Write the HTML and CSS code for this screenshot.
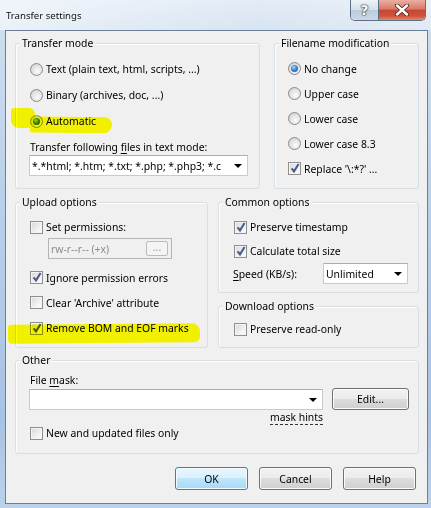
FILE: index.html
```html
<!DOCTYPE html>
<html lang="en">
<head>
    <meta charset="UTF-8">
    <meta name="viewport" content="width=device-width, initial-scale=1.0">
    <title>Transfer settings</title>
    <link rel="stylesheet" href="styles.css">
</head>
<body>

    <div class="titlebar">
        <span class="title">Transfer settings</span>
        <div class="caption-buttons">
            <span class="cap-btn help-btn">?</span>
            <span class="cap-btn close-btn">
                <svg width="16" height="12" viewBox="0 0 16 12">
                    <path d="M3 1.5 L13 10.5 M13 1.5 L3 10.5" stroke="#5a2a22" stroke-width="4.2" stroke-linecap="round"/>
                    <path d="M3 1.5 L13 10.5 M13 1.5 L3 10.5" stroke="#fff" stroke-width="2.4" stroke-linecap="round"/>
                </svg>
            </span>
        </div>
    </div>

    <div class="client">

        <div class="row-top">
            <div class="group transfer-mode">
                <span class="group-title">Transfer mode</span>
                <div class="opt"><span class="radio"></span>Text (plain text, html, scripts, ...)</div>
                <div class="opt"><span class="radio"></span>Binary (archives, doc, ...)</div>
                <div class="opt"><span class="radio checked"></span>Automatic</div>
                <div class="field-label">Transfer following <u>f</u>iles in text mode:</div>
                <div class="combo mask-combo">
                    <span class="combo-text">*.*html; *.htm; *.txt; *.php; *.php3; *.c</span>
                    <span class="arrow"></span>
                </div>
            </div>

            <div class="group filename-mod">
                <span class="group-title">Filename modification</span>
                <div class="opt"><span class="radio checked"></span>No change</div>
                <div class="opt"><span class="radio"></span>Upper case</div>
                <div class="opt"><span class="radio"></span>Lower case</div>
                <div class="opt"><span class="radio"></span>Lower case 8.3</div>
                <div class="opt"><span class="check checked"></span>Replace '\:*?' ...</div>
            </div>
        </div>

        <div class="row-middle">
            <div class="group upload">
                <span class="group-title">Upload options</span>
                <div class="opt first"><span class="check"></span>Set permissions:</div>
                <div class="perm-field">
                    <span class="perm-text">rw-r--r-- (+x)</span>
                    <span class="perm-btn">...</span>
                </div>
                <div class="opt spaced"><span class="check checked"></span>Ignore permission errors</div>
                <div class="opt"><span class="check"></span>Clear 'Archive' attribute</div>
                <div class="opt tall"><span class="check checked"></span>Remove BOM and EOF marks</div>
            </div>

            <div class="right-stack">
                <div class="group common">
                    <span class="group-title">Common options</span>
                    <div class="opt"><span class="check checked"></span>Preserve timestamp</div>
                    <div class="opt"><span class="check checked"></span>Calculate total size</div>
                    <div class="speed-row">
                        <span class="speed-label"><u>S</u>peed (KB/s):</span>
                        <div class="combo speed-combo">
                            <span class="combo-text">Unlimited</span>
                            <span class="arrow"></span>
                        </div>
                    </div>
                </div>

                <div class="group download">
                    <span class="group-title">Download options</span>
                    <div class="opt"><span class="check"></span>Preserve read-only</div>
                </div>
            </div>
        </div>

        <div class="group other">
            <span class="group-title">Other</span>
            <div class="field-label">File <u>m</u>ask:</div>
            <div class="mask-row">
                <div class="combo file-mask">
                    <span class="combo-text"></span>
                    <span class="arrow"></span>
                </div>
                <button class="btn edit-btn">Edit...</button>
            </div>
            <div class="hints-row"><span class="hints">mask hints</span></div>
            <div class="opt"><span class="check"></span>New and updated files only</div>
        </div>

        <div class="buttons">
            <button class="btn default">OK</button>
            <button class="btn">Cancel</button>
            <button class="btn">Help</button>
        </div>

        <!-- marker strokes somebody drew on the screenshot -->
        <div class="marker marker-auto-a"></div>
        <div class="marker marker-auto-b"></div>
        <div class="marker marker-bom"></div>
    </div>

</body>
</html>
```

FILE: styles.css
```css
body {
    margin: 0;
    width: 431px;
    height: 508px;
    overflow: hidden;
    font-family: 'Noto Sans', 'Open Sans', sans-serif;
    font-size: 10.4px;
    color: #000;
    background: linear-gradient(180deg, #dfe9f4 0px, #cbdcee 40px, #b9d0ea 200px, #a7c3e3 420px, #bcd2ea 508px);
}

u {
    text-decoration: underline;
    text-underline-offset: 2px;
}

/* title bar */

.titlebar {
    display: flex;
    align-items: flex-start;
    height: 30px;
    background: linear-gradient(90deg, rgba(255,255,255,0.55), rgba(255,255,255,0.15) 60%, rgba(255,255,255,0.35));
}

.title {
    margin: 8px 0 0 6px;
    line-height: 16px;
    font-size: 9.6px;
    color: #111;
    text-shadow: 0 0 6px rgba(255, 255, 255, 0.9);
}

.caption-buttons {
    display: flex;
    margin-left: auto;
    margin-right: 5px;
    height: 20px;
    border: 1px solid #5f6f82;
    border-top: none;
    border-radius: 0 0 5px 5px;
    overflow: hidden;
}

.cap-btn {
    display: flex;
    align-items: center;
    justify-content: center;
    height: 20px;
}

.help-btn {
    width: 27px;
    border-right: 1px solid #5f6f82;
    background: linear-gradient(180deg, #eef3f8 0%, #d6e0ea 48%, #bccbda 52%, #cdd9e5 100%);
    color: #fff;
    font-family: 'DejaVu Sans', sans-serif;
    font-size: 14px;
    font-weight: bold;
    text-shadow: 0 0 1px #333, 0 0 1px #333, 0 0 2px #333;
}

.close-btn {
    width: 46px;
    background: linear-gradient(180deg, #eab0a2 0%, #d9796a 45%, #c84634 52%, #d0523a 80%, #e08a6a 100%);
}

/* client area */

.client {
    position: relative;
    box-sizing: border-box;
    width: 423px;
    height: 474px;
    margin-left: 5px;
    padding: 12px 8px 0 9px;
    background: #f0f0f0;
    border: 1px solid #6d7f96;
}

.group {
    position: relative;
    box-sizing: border-box;
    border: 1px solid #d5dfe5;
    border-radius: 3px;
    box-shadow: inset 1px 1px 0 #fff;
}

.group-title {
    position: absolute;
    top: -8px;
    left: 4px;
    padding: 0 2px;
    height: 15px;
    line-height: 15px;
    white-space: nowrap;
    background: #f0f0f0;
}

.opt {
    display: flex;
    align-items: center;
    height: 25px;
    white-space: nowrap;
}

.radio {
    box-sizing: border-box;
    flex: none;
    width: 13px;
    height: 13px;
    margin-right: 3px;
    border: 1px solid #8a8a8a;
    border-radius: 50%;
    background: radial-gradient(circle at 60% 65%, #fbfbfb 0, #e6e6e6 45%, #c9c9c9 100%);
    position: relative;
}

.radio.checked::after {
    content: "";
    position: absolute;
    left: 2px;
    top: 2px;
    width: 7px;
    height: 7px;
    border-radius: 50%;
    background: radial-gradient(circle at 40% 35%, #a9e0ff 0, #3c8fd6 40%, #0f4c96 100%);
}

.check {
    box-sizing: border-box;
    flex: none;
    width: 13px;
    height: 13px;
    margin-right: 3px;
    border: 1px solid #8e8f8f;
    background: linear-gradient(135deg, #d8d8d8, #f4f4f4 70%, #fcfcfc);
    box-shadow: inset 0 0 0 1px #f4f4f4;
    position: relative;
}

.check.checked::after {
    content: "";
    position: absolute;
    left: 1px;
    top: -1px;
    width: 10px;
    height: 12px;
    background: url("data:image/svg+xml;utf8,<svg xmlns='http://www.w3.org/2000/svg' width='10' height='12'><path d='M1.6 6.4 L4 9.4 L8.6 2' fill='none' stroke='%234a5b8c' stroke-width='2.1'/></svg>") no-repeat;
}

.field-label {
    height: 16px;
    line-height: 16px;
    white-space: nowrap;
}

.combo {
    box-sizing: border-box;
    display: flex;
    align-items: center;
    height: 21px;
    background: #fff;
    border: 1px solid #c5cbd3;
    border-top-color: #abadb3;
    overflow: hidden;
}

.combo-text {
    flex: 1;
    padding-left: 2px;
    white-space: nowrap;
    overflow: hidden;
}

.arrow {
    flex: none;
    width: 0;
    height: 0;
    margin: 1px 5px 0 6px;
    border-left: 4px solid transparent;
    border-right: 4px solid transparent;
    border-top: 4px solid #000;
}

/* top row */

.row-top {
    display: flex;
    gap: 14px;
}

.transfer-mode {
    width: 245px;
    height: 146px;
    padding: 12px 0 0 14px;
}

.transfer-mode .opt {
    height: 26px;
}

.transfer-mode .field-label {
    margin-top: 5px;
}

.mask-combo {
    width: 219px;
    margin-left: -1px;
}

.filename-mod {
    width: 145px;
    height: 146px;
    padding: 12px 0 0 13px;
}

/* middle row */

.row-middle {
    display: flex;
    gap: 10px;
    margin-top: 13px;
}

.upload {
    width: 193px;
    height: 146px;
    padding: 14px 0 0 14px;
}

.upload .first {
    height: 20px;
}

.perm-field {
    box-sizing: border-box;
    display: flex;
    align-items: center;
    width: 124px;
    height: 21px;
    margin: 1px 0 0 18px;
    border: 1px solid #b5b5b5;
    background: #f0f0f0;
    color: #8d8d8d;
}

.perm-text {
    flex: 1;
    padding-left: 2px;
    white-space: nowrap;
}

.perm-btn {
    box-sizing: border-box;
    width: 22px;
    height: 15px;
    margin-right: 3px;
    border: 1px solid #b8bcc0;
    border-radius: 2px;
    background: #f4f4f4;
    line-height: 11px;
    text-align: center;
    color: #9a9a9a;
}

.upload .spaced {
    margin-top: 6px;
}

.upload .tall {
    height: 26px;
}

.right-stack {
    display: flex;
    flex-direction: column;
}

.common {
    width: 201px;
    height: 91px;
    padding: 12px 0 0 15px;
}

.common .opt {
    height: 24px;
}

.speed-row {
    display: flex;
    align-items: center;
    height: 21px;
}

.speed-label {
    width: 90px;
    margin-left: -1px;
    white-space: nowrap;
}

.speed-combo {
    width: 85px;
}

.download {
    width: 201px;
    height: 42px;
    margin-top: 13px;
    padding: 10px 0 0 15px;
}

.download .opt {
    height: 24px;
}

/* other */

.other {
    width: 404px;
    height: 94px;
    margin-top: 12px;
    padding: 11px 0 0 14px;
}

.mask-row {
    display: flex;
    align-items: center;
    height: 22px;
}

.file-mask {
    width: 294px;
    margin-left: -1px;
}

.hints-row {
    display: flex;
    justify-content: flex-end;
    width: 294px;
    height: 15px;
    margin-left: -1px;
}

.hints {
    height: 14px;
    line-height: 14px;
    border-bottom: 1px dashed #333;
}

.other .opt {
    height: 16px;
}

/* buttons */

.buttons {
    display: flex;
    justify-content: flex-end;
    gap: 11px;
    margin-top: 13px;
    padding-right: 3px;
}

.btn {
    box-sizing: border-box;
    width: 73px;
    height: 23px;
    padding: 0;
    font-family: inherit;
    font-size: 10.4px;
    color: #000;
    border: 1px solid #707070;
    border-radius: 3px;
    background: linear-gradient(180deg, #f2f2f2 0%, #ebebeb 49%, #dddddd 50%, #cfcfcf 100%);
    box-shadow: inset 0 0 0 1px #fbfbfb;
}

.btn.default {
    border-color: #3c7fb1;
    background: linear-gradient(180deg, #eaf6fd 0%, #d9f0fc 49%, #bee6fd 50%, #a7d9f5 100%);
    box-shadow: inset 0 0 0 1px #f4fbff;
}

.edit-btn.btn {
    width: 77px;
    height: 22px;
    margin-left: 9px;
}

/* highlighter */

.marker {
    position: absolute;
    background: #ffff00;
    mix-blend-mode: multiply;
}

.marker-auto-a {
    left: 5px;
    top: 77px;
    width: 24px;
    height: 20px;
    border-radius: 3px 6px 2px 8px;
}

.marker-auto-b {
    left: 24px;
    top: 86px;
    width: 82px;
    height: 16px;
    border-radius: 2px 8px 10px 3px;
    transform: rotate(0.6deg);
}

.marker-bom {
    left: 2px;
    top: 293px;
    width: 192px;
    height: 19px;
    border-radius: 3px 8px 6px 4px;
    transform: rotate(-0.5deg);
}
```
